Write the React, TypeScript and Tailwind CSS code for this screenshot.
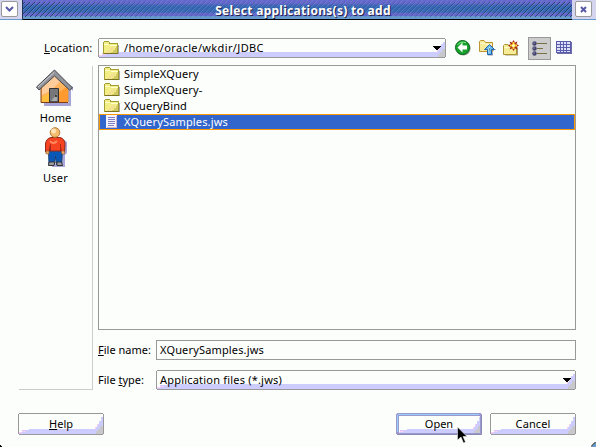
import React from "react";

const FONT = "font-['Noto_Sans','DejaVu_Sans',sans-serif]";

function Folder({ className = "" }: { className?: string }) {
  return (
    <svg width="16" height="14" viewBox="0 0 16 14" className={className} shapeRendering="crispEdges">
      <path d="M2 13H16V4H15V12H2Z" fill="#a9a6a4" />
      <path d="M1 0H6V1H7V2H15V13H0V1H1Z" fill="#a39f33" />
      <path d="M1 1H6V3H14V12H1Z" fill="#f2ee84" />
      <path d="M1 3H6V4H14V5H7V4H1Z" fill="#ffffd0" />
      <path d="M14 5V12H8V11H10V9H12V7H13V5Z" fill="#d0c862" />
      <path d="M3 12V11H5V9H7V7H9V6H11V8H9V10H7V12Z" fill="#f3dc96" />
      <path d="M1 12H15V13H1Z" fill="#7a7422" />
    </svg>
  );
}

function FileIcon() {
  return (
    <svg width="14" height="14" viewBox="0 0 14 14" shapeRendering="crispEdges">
      <path d="M1 0H12V13H1Z" fill="#f5f2ff" />
      <path d="M11 1H12V13H2V12H11Z" fill="#d1b5ca" />
      <path d="M3 2H10V3H3ZM3 4H10V5H3ZM3 6H10V7H3ZM3 8H10V9H3ZM3 10H9V11H3Z" fill="#8080c4" />
    </svg>
  );
}

function HomeIcon() {
  return (
    <svg width="38" height="38" viewBox="0 0 38 38">
      <path d="M8 37H35V20L37 22V18L33 15V34H8Z" fill="#a7a5d5" />
      <path d="M5 18L19 5L32 18V33.500H5Z" fill="#ffb45d" stroke="#794019" />
      <path d="M6 18L19 6L25 12L14 22L6 26Z" fill="#ffcc9b" />
      <path d="M22 24L32 17V33H22Z" fill="#ff9a30" />
      <path d="M6 28L14 24V33H6Z" fill="#ffbf3f" />
      <path d="M0.500 18L18.500 1L36.500 19L33.500 21L18.500 7L3 21Z" fill="#92949a" stroke="#44464b" />
      <path d="M2 18L18.500 3" stroke="#c9cdcd" />
      <path d="M13.500 33V19.500H22.500V33Z" fill="#77777a" stroke="#333" />
      <path d="M15 32L21 25V32Z" fill="#aaa" />
      <circle cx="20" cy="27" r="1" fill="#222" />
    </svg>
  );
}

function UserIcon() {
  return (
    <svg width="24" height="41" viewBox="0 0 24 41">
      <path d="M7 40H20V28L22 26V15L18 12L16 37H7Z" fill="#aaa8d9" />
      <path d="M3.500 22H17.500L16.500 37.500H11.500L10.500 29L9.500 37.500H4Z" fill="#0958b8" stroke="#153e75" />
      <path d="M4 35H10L9 38.500H3.500ZM12 35H16.500L17.500 38.500H12Z" fill="#9c9da5" stroke="#333" />
      <path d="M6 10.500H15Q19.500 11.500 20 17L19.500 25H16L15.500 20L16 24H5L5.500 18L4 25H.5V17Q1 11.500 6 10.500Z" fill="#f64422" stroke="#902818" />
      <path d="M5 14Q8 18 12 14" fill="none" stroke="#ff8b61" strokeWidth="2" />
      <path d="M5.500 17V23M15.500 17V23" stroke="#a82a18" />
      <path d="M1 24H4V27H1ZM16.500 24H19.500V27H16.500Z" fill="#e9a864" stroke="#795026" strokeWidth=".5" />
      <circle cx="10" cy="5.500" r="4.800" fill="#f3bd70" stroke="#b47736" />
      <circle cx="8.500" cy="4" r="2.500" fill="#ffe2b5" />
    </svg>
  );
}

function BackIcon() {
  return (
    <svg width="16" height="16" viewBox="0 0 16 16">
      <circle cx="8.300" cy="8.300" r="7.300" fill="#8e9a8e" />
      <circle cx="7.500" cy="7.500" r="7" fill="#17a32b" stroke="#08651a" />
      <path d="M2.500 5Q5 1 11 2.500" stroke="#8be68f" fill="none" />
      <path d="M2.500 7.500L7.500 2.500V5.500H12V9.500H7.500V12.500Z" fill="#fff" />
    </svg>
  );
}

function UpIcon() {
  return (
    <svg width="17" height="16" viewBox="0 0 17 16">
      <path d="M.5 11.500V1.500L1.500 .5H5L6.500 2.500H13.500V11.500Z" fill="#f7eb9a" stroke="#bd9431" />
      <path d="M1 3.500H6L7 4.500H13" stroke="#fff9cf" fill="none" />
      <path d="M8 15.500H14V10H17L16 9L12 14Z" fill="#8b9bb9" />
      <path d="M8.500 14.500V9.500H5.500L10.500 4.500L15.500 9.500H12.500V14.500Z" fill="#65baf0" stroke="#2863a5" />
      <path d="M10 13V8L11 7" stroke="#c1edff" />
    </svg>
  );
}

function NewFolderIcon() {
  return (
    <svg width="17" height="16" viewBox="0 0 17 16">
      <path d="M2 15.500H15V7Z" fill="#a69d76" />
      <path d="M.5 14.500V5.500L1.500 4.500H5L6.500 6.500H13.500V14.500Z" fill="#f4ec96" stroke="#ad9431" />
      <path d="M1 7.500H6L7 8.500H13" stroke="#fffac6" fill="none" />
      <path d="M10.500 0L12 2.500L14.500 1.500L13.500 4L16 5.500L13.500 7L14.500 9.500L12 8.500L10.500 11L9 8.500L6.500 9.500L7.500 7L5 5.500L7.500 4L6.500 1.500L9 2.500Z" fill="#a82c18" />
      <path d="M10.500 2V9M7 5.500H14" stroke="#ffd935" strokeWidth="2" />
      <circle cx="10.500" cy="5.500" r="1.500" fill="#fff9b8" />
    </svg>
  );
}

function DetailsIcon() {
  return (
    <svg width="15" height="15" viewBox="0 0 15 15">
      {[2.5, 7.5, 12.5].map((y) => (
        <g key={y}>
          <circle cx="2.500" cy={y} r="2.200" fill="#41436d" />
          <circle cx="2" cy={y - 0.5} r=".7" fill="#a5a5d6" />
          <path d={`M5 ${y}H${y === 7.5 ? 11 : 15}`} stroke="#777044" />
        </g>
      ))}
    </svg>
  );
}

function TableIcon() {
  return (
    <svg width="16" height="14" viewBox="0 0 16 14" shapeRendering="crispEdges">
      <path d="M1 1H16V13H1Z" fill="#6f6ea6" />
      <path d="M0 0H15V12H0Z" fill="#5a5dab" />
      {[1, 4, 7, 10].map((y) =>
        [1, 5, 8, 11].map((x) => (
          <rect key={`${x}-${y}`} x={x} y={y} width={x === 1 || x === 11 ? 3 : 2} height={y === 10 ? 1 : 2} fill="#dfe1fc" />
        )),
      )}
    </svg>
  );
}

function Face({ width, height, active = false }: { width: number; height: number; active?: boolean }) {
  const w = width;
  const h = height;
  return (
    <svg width={w} height={h} className="absolute inset-0" shapeRendering="crispEdges">
      <path d={`M1 0H${w - 1}V1H${w}V${h - 1}H${w - 1}V${h}H1V${h - 1}H0V1H1Z`} fill={active ? "#9999cc" : "#999999"} />
      <rect x="1" y="1" width={w - 2} height={h - 2} fill="#fcfefc" />
      <path d={`M1 ${h - 1}V${h - 3}H4V${h - 5}H11V${h - 6}H${w - 9}V${h - 8}H${w - 7}V${h - 11}H${w - 5}V${h - 14}H${w - 3}V4H${w - 1}V${h - 1}Z`} fill="#ccccff" />
      <path d={`M1 ${h - 3}H4V${h - 2}H1ZM4 ${h - 4}H8V${h - 3}H4ZM${w - 9} ${h - 8}H${w - 8}V${h - 6}H${w - 9}ZM${w - 7} ${h - 11}H${w - 6}V${h - 9}H${w - 7}Z`} fill="#ffccee" />
      <path d={`M${w - 8} ${h - 1}V${h - 4}H${w - 6}V${h - 6}H${w - 4}V${h - 9}H${w - 1}V${h - 1}Z`} fill="#c8c8cc" />
      {active && (
        <>
          <rect x="1.500" y="1.500" width={w - 3} height={h - 3} fill="none" stroke="#9999cc" strokeWidth="2" />
          <path d={`M2 1.500H${w - 3}M1.500 2V${h - 3}`} stroke="#99ccff" fill="none" />
          <path d={`M1 ${h - 0.5}H${w - 1}M${w - 0.5} 2V${h - 1}`} stroke="#8a8ab8" fill="none" />
        </>
      )}
    </svg>
  );
}

function Caret() {
  return (
    <svg width="8" height="4" viewBox="0 0 8 4" shapeRendering="crispEdges">
      <path d="M0 0H8V1H7V2H6V3H5V4H3V3H2V2H1V1H0Z" fill="#000" />
    </svg>
  );
}

function TitleTexture() {
  return (
    <svg width="550" height="20" className="absolute inset-0" shapeRendering="crispEdges">
      <defs>
        <linearGradient id="bar" x1="0" y1="0" x2="0" y2="1">
          <stop offset="0" stopColor="#6666cc" />
          <stop offset=".2" stopColor="#6666cc" />
          <stop offset=".24" stopColor="#4a66bf" />
          <stop offset=".4" stopColor="#3366b2" />
          <stop offset=".65" stopColor="#3f68b8" />
          <stop offset=".7" stopColor="#6666cc" />
          <stop offset=".84" stopColor="#6666cc" />
          <stop offset=".87" stopColor="#6699cc" />
          <stop offset="1" stopColor="#6699cc" />
        </linearGradient>
        <linearGradient id="ends">
          <stop offset="0" stopColor="#fff" stopOpacity=".9" />
          <stop offset=".28" stopColor="#fff" stopOpacity=".2" />
          <stop offset=".68" stopColor="#fff" stopOpacity=".2" />
          <stop offset="1" stopColor="#fff" stopOpacity=".9" />
        </linearGradient>
        <pattern id="dark" width="5" height="5" patternUnits="userSpaceOnUse">
          <path d="M0 4H1V5H0ZM1 3H2V4H1ZM2 2H3V3H2ZM3 1H4V2H3ZM4 0H5V1H4Z" fill="#1c3a5c" />
        </pattern>
        <pattern id="light" width="5" height="5" patternUnits="userSpaceOnUse">
          <path d="M1 4H2V5H1ZM2 3H3V4H2ZM3 2H4V3H3ZM4 1H5V2H4ZM0 0H1V1H0Z" fill="#6699cc" opacity=".45" />
        </pattern>
        <mask id="fade"><rect width="550" height="20" fill="url(#ends)" /></mask>
      </defs>
      <rect width="550" height="19" fill="url(#bar)" />
      <rect width="550" height="18" fill="url(#light)" />
      <rect y="2" width="550" height="15" fill="url(#dark)" mask="url(#fade)" />
      <rect y="19" width="550" height="1" fill="#000" />
      <rect width="1" height="20" fill="#223355" />
    </svg>
  );
}

export default function App() {
  return (
    <div className={`relative flex h-[447px] w-[596px] flex-col overflow-hidden bg-[#fcfefc] text-[11px] leading-4 text-black ${FONT}`}>
      <header className="flex h-5 shrink-0">
        <div className="flex w-[22px] border-b border-[#6699cc] bg-[#d4d4ee] pl-px pt-px">
          <div className="flex h-4 w-[17px] items-center justify-center rounded-[2px] border border-[#999] bg-white">
            <svg width="9" height="6" viewBox="0 0 9 6"><path d="M1 1L4.500 4.500L8 1" fill="none" stroke="#5858a5" strokeWidth="2" /></svg>
          </div>
        </div>
        <div className="relative flex w-[550px] justify-center">
          <TitleTexture />
          <h1 className="relative ml-[12px] whitespace-nowrap pt-px font-['Noto_Sans'] text-[12px] font-bold leading-[20px] tracking-[0.28px] text-white [text-shadow:1px_1px_0_#24254b]">Select applications(s) to add</h1>
        </div>
        <div className="flex w-6 border-b border-[#6699cc] bg-[#d4d4ee] pl-[3px] pt-px">
          <div className="flex h-4 w-[17px] items-center justify-center rounded-[2px] border border-[#999] bg-white">
            <svg width="7" height="7" viewBox="0 0 7 7"><path d="M1 1L6 6M6 1L1 6" stroke="#5858a5" strokeWidth="2" /></svg>
          </div>
        </div>
      </header>

      <div className="flex h-[45px] shrink-0 pt-[18px]">
        <div className="w-[98px] shrink-0 whitespace-nowrap pl-[44px] pt-[2px] tracking-[0.15px]"><u>L</u>ocation:</div>
        <div className="relative flex h-5 w-[348px] shrink-0 items-center pl-[5px] pr-[5px]">
          <Face width={348} height={20} />
          <Folder className="relative" />
          <span className="relative ml-[5px] flex-1 whitespace-nowrap tracking-[0.36px]">/home/oracle/wkdir/JDBC</span>
          <span className="relative"><Caret /></span>
        </div>
        <div className="ml-[9px] flex h-5 items-center">
          <BackIcon />
          <div className="ml-2"><UpIcon /></div>
          <div className="ml-[7px]"><NewFolderIcon /></div>
          <div className="ml-2 flex h-[23px] w-[23px] items-center justify-center border border-[#999] bg-[#ccc]"><DetailsIcon /></div>
          <div className="ml-[5px]"><TableIcon /></div>
        </div>
      </div>

      <div className="flex h-[325px] shrink-0">
        <aside className="ml-[19px] mt-px flex h-[324px] w-[74px] shrink-0 flex-col items-center border-b border-r border-[#ccc] pt-[3px]">
          <div className="mr-px"><HomeIcon /></div>
          <div className="mt-[3px] tracking-[0.1px]">Home</div>
          <div className="ml-[3px] mt-px"><UserIcon /></div>
          <div className="mt-[2px] tracking-[0.2px]">User</div>
        </aside>
        <main className="ml-[5px] w-[478px]">
          <div className="h-[265px] border border-[#999]">
            {["SimpleXQuery", "SimpleXQuery-", "XQueryBind"].map((name) => (
              <div key={name} className="flex h-4 items-center pl-[5px]"><Folder /><span className="ml-1 tracking-[0.15px]">{name}</span></div>
            ))}
            <div className="flex h-4 items-center border border-[#ff9900] bg-[#3366cc] pl-[5px] text-white"><FileIcon /><span className="ml-[5px] tracking-[0.16px]">XQuerySamples.jws</span></div>
          </div>
          <div className="mt-[10px] flex h-5">
            <div className="w-[58px] whitespace-nowrap pt-[2px]"><u>F</u>ile name:</div>
            <div className="flex w-[420px] items-center border border-[#999] pl-[3px] tracking-[0.16px]">XQuerySamples.jws</div>
          </div>
          <div className="mt-[10px] flex h-5">
            <div className="w-[58px] whitespace-nowrap pt-[2px]">File <u>t</u>ype:</div>
            <div className="relative flex w-[420px] items-center pl-1 pr-[5px]">
              <Face width={420} height={20} />
              <span className="relative flex-1 tracking-[0.2px]">Application files (*.jws)</span>
              <span className="relative"><Caret /></span>
            </div>
          </div>
        </main>
      </div>

      <footer className="ml-[18px] mt-[23px] flex h-[22px] w-[558px]">
        <button className="relative h-[22px] w-[86px]"><Face width={86} height={22} /><span className="relative"><u>H</u>elp</span></button>
        <button className="relative ml-auto h-[22px] w-[86px]"><Face width={86} height={22} active /><span className="relative">Open</span></button>
        <button className="relative ml-2 h-[22px] w-[86px]"><Face width={86} height={22} /><span className="relative tracking-[0.1px]">Cancel</span></button>
      </footer>

      <svg width="11" height="17" viewBox="0 0 11 17" className="absolute left-[457px] top-[427px]">
        <path d="M.5 0L10 9.500H6L8.500 15L6.500 16L4 10L.5 13Z" fill="#000" stroke="#fff" strokeWidth=".5" />
      </svg>
      <svg width="5" height="5" viewBox="0 0 5 5" className="absolute bottom-0 right-0"><path d="M0 5L5 0V5Z" fill="#6699cc" /><path d="M0 4.500L4.500 0" stroke="#000" /></svg>
      <svg width="2" height="2" className="absolute bottom-0 left-0"><path d="M0 0H1V1H2V2H0Z" fill="#000" /></svg>
    </div>
  );
}
